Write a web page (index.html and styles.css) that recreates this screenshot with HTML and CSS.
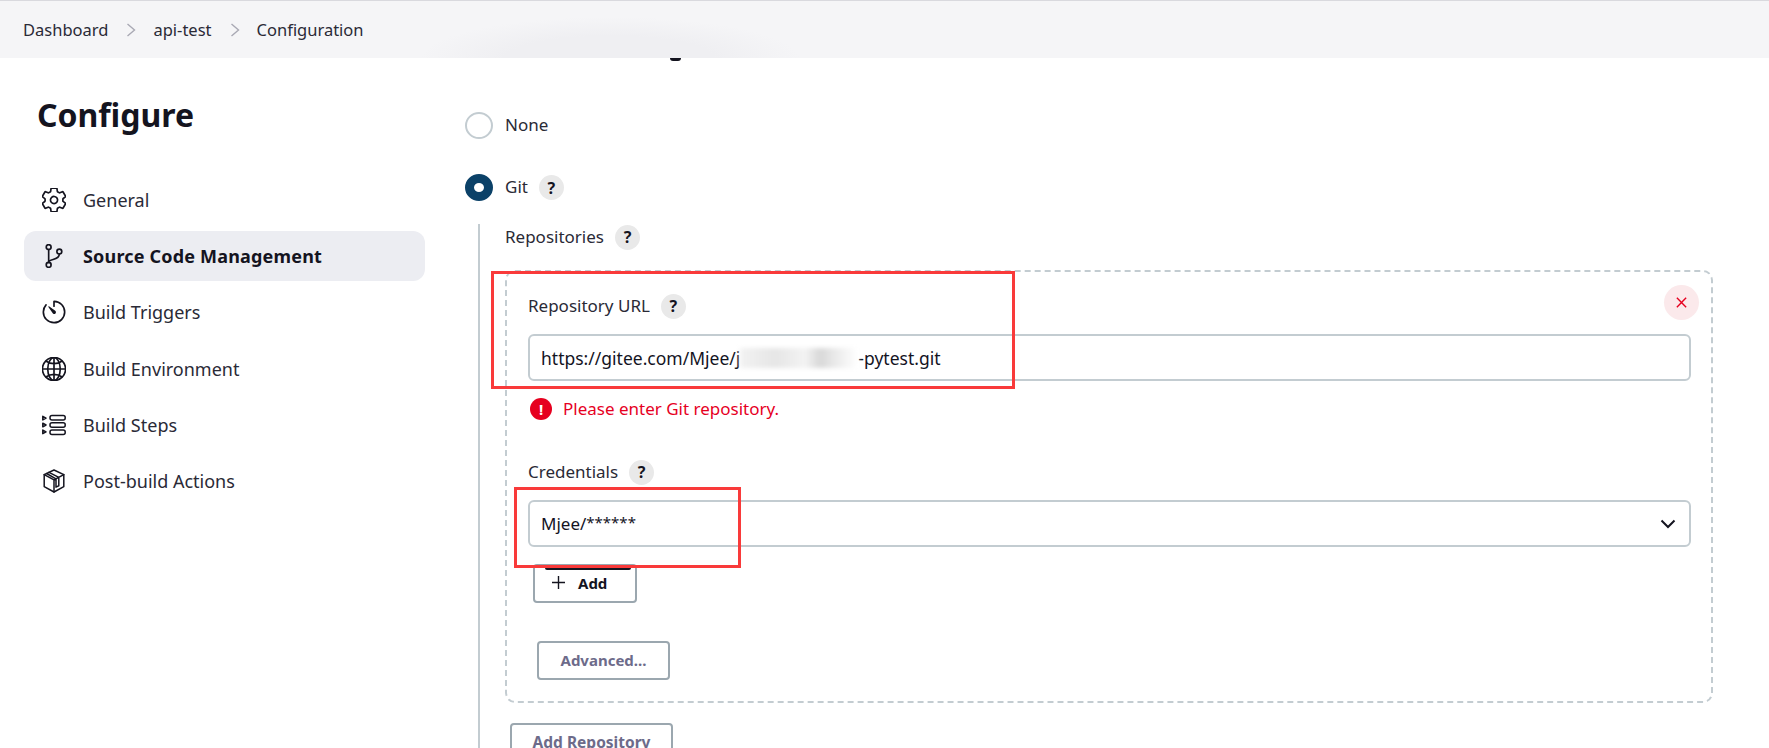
FILE: index.html
```html
<!DOCTYPE html>
<html lang="en">
<head>
<meta charset="utf-8">
<title>Configure</title>
<link rel="stylesheet" href="styles.css">
</head>
<body>
<nav class="crumbs">
  <span>Dashboard</span>
  <svg class="sep" viewBox="0 0 10 16"><path d="M1.5 2l7 6-7 6"/></svg>
  <span>api-test</span>
  <svg class="sep" viewBox="0 0 10 16"><path d="M1.5 2l7 6-7 6"/></svg>
  <span>Configuration</span>
  <i class="clipped-tail"></i>
</nav>
<div class="page">
  <aside class="side">
    <h1 class="title">Configure</h1>
    <ul class="menu">
      <li class="item">
        <svg class="ico" viewBox="40 40 432 432"><path d="M262.29 192.31a64 64 0 1057.4 57.4 64.13 64.13 0 00-57.4-57.4zM416.39 256a154.34 154.34 0 01-1.53 20.79l45.21 35.46a10.81 10.81 0 012.45 13.75l-42.77 74a10.81 10.81 0 01-13.14 4.59l-44.9-18.08a16.11 16.11 0 00-15.17 1.75A164.48 164.48 0 01325 400.8a15.94 15.94 0 00-8.82 12.14l-6.73 47.89a11.08 11.08 0 01-10.68 9.17h-85.54a11.11 11.11 0 01-10.69-8.87l-6.72-47.82a16.07 16.07 0 00-9-12.22 155.3 155.3 0 01-21.46-12.57 16 16 0 00-15.11-1.71l-44.89 18.07a10.81 10.81 0 01-13.14-4.58l-42.77-74a10.8 10.8 0 012.45-13.75l38.21-30a16.05 16.05 0 006-14.08c-.36-4.17-.58-8.33-.58-12.5s.21-8.27.58-12.35a16 16 0 00-6.07-13.94l-38.19-30A10.81 10.81 0 0149.48 186l42.77-74a10.81 10.81 0 0113.14-4.59l44.9 18.08a16.11 16.11 0 0015.17-1.75A164.48 164.48 0 01187 111.2a15.94 15.94 0 008.82-12.14l6.73-47.89A11.08 11.08 0 01213.23 42h85.54a11.11 11.11 0 0110.69 8.87l6.72 47.82a16.07 16.07 0 009 12.22 155.3 155.3 0 0121.46 12.57 16 16 0 0015.11 1.71l44.89-18.07a10.81 10.81 0 0113.14 4.58l42.77 74a10.8 10.8 0 01-2.45 13.75l-38.21 30a16.05 16.05 0 00-6.05 14.08c.33 4.14.55 8.3.55 12.47z"/></svg>
        General
      </li>
      <li class="item active">
        <svg class="ico" viewBox="40 40 432 432"><circle cx="160" cy="96" r="44"/><circle cx="160" cy="416" r="44"/><circle cx="352" cy="176" r="44"/><path d="M160 372V140M352 220c0 128-192 72-192 152"/></svg>
        Source Code Management
      </li>
      <li class="item">
        <svg class="ico" viewBox="40 40 432 432"><path d="M112.91 128A191.85 191.85 0 0064 254c-1.18 106.35 85.65 193.8 192 194 106.2.2 192-85.83 192-192 0-104.54-83.55-189.61-187.5-192a4.36 4.36 0 00-4.5 4.37V152"/><path class="solid" d="M233.38 278.63l-79-113a8.13 8.13 0 0111.32-11.32l113 79a32.5 32.5 0 01-37 53.34 33.21 33.21 0 01-8.32-8.02z"/></svg>
        Build Triggers
      </li>
      <li class="item">
        <svg class="ico" viewBox="40 40 432 432"><path d="M256 48C141.13 48 48 141.13 48 256s93.13 208 208 208 208-93.13 208-208S370.87 48 256 48z"/><path d="M256 48c-58.07 0-112.67 93.31-112.67 208S197.93 464 256 464s112.67-93.31 112.67-208S314.07 48 256 48z"/><path d="M117.33 117.33c38.24 27.15 86.38 43.34 138.67 43.34s100.43-16.19 138.67-43.34M394.67 394.67c-38.24-27.15-86.38-43.34-138.67-43.34s-100.43 16.19-138.67 43.34M256 48v416M464 256H48"/></svg>
        Build Environment
      </li>
      <li class="item">
        <svg class="ico" viewBox="0 0 24 24"><g class="thin"><path d="M.8 3.300l3.200 1.800-3.200 1.800zM.8 10.200l3.200 1.800-3.200 1.800zM.8 17.100l3.200 1.800-3.200 1.800z"/><rect x="8" y="2.500" width="15.200" height="4.500" rx="2"/><rect x="8" y="9.750" width="15.200" height="4.500" rx="2"/><rect x="8" y="17" width="15.200" height="4.500" rx="2"/></g></svg>
        Build Steps
      </li>
      <li class="item">
        <svg class="ico" viewBox="0 0 24 24"><g class="thin"><path d="M12 1l9.800 4.600v12L12 23 2.200 17.600v-12z"/><path d="M2.200 5.600L12 10.800l9.800-5.200M12 10.800V23M7 3.300l9.800 5v8.500l-2.800 1.300v-8.300L4.600 4.500"/></g></svg>
        Post-build Actions
      </li>
    </ul>
  </aside>

  <main class="main">
    <div class="option">
      <span class="radio"></span>
      <span class="txt">None</span>
    </div>
    <div class="option option-git">
      <span class="radio radio-on"></span>
      <span class="txt">Git</span>
      <span class="help">?</span>
    </div>
    <section class="nested">
      <div class="label-row label-repos"><span class="txt">Repositories</span><span class="help">?</span></div>
      <div class="repo-box">
        <button class="close" type="button" aria-label="Remove">
          <svg viewBox="0 0 14 14"><path d="M2 2l10 10M12 2L2 12"/></svg>
        </button>
        <div class="label-row"><span class="txt">Repository URL</span><span class="help">?</span></div>
        <div class="field field-url">https://gitee.com/Mjee/j<span class="smudge"></span>-pytest.git</div>
        <div class="error">
          <span class="error-ico">!</span>
          <span class="txt">Please enter Git repository.</span>
        </div>
        <div class="label-row label-cred"><span class="txt">Credentials</span><span class="help">?</span></div>
        <div class="field field-select">
          <span>Mjee/<span class="stars">******</span></span>
          <svg class="chev" viewBox="0 0 16 10"><path d="M1.500 1.500L8 8l6.500-6.500"/></svg>
        </div>
        <button class="btn btn-add" type="button">
          <i class="btn-smear"></i>
          <svg class="plus" viewBox="0 0 14 14"><path d="M7 0v14M0 7h14"/></svg>
          Add
        </button>
        <button class="btn btn-adv" type="button">Advanced...</button>
      </div>
      <button class="btn btn-repo" type="button">Add Repository</button>
    </section>
  </main>
</div>
<i class="mark mark-url"></i>
<i class="mark mark-cred"></i>
</body>
</html>
```
FILE: styles.css
```css
* { box-sizing: border-box; }
html, body { margin: 0; height: 748px; overflow: hidden; }
body {
  position: relative;
  background: #fff;
  color: #14141f;
  font-family: "Noto Sans", "Open Sans", sans-serif;
  font-size: 17px;
}
.txt { margin-bottom: 2px; }
.crumbs {
  position: relative;
  display: flex;
  align-items: center;
  height: 58px;
  padding-left: 23px;
  border-top: 1px solid #d9d9de;
  background: #f5f5f7 radial-gradient(ellipse 190px 42px at 610px 58px, #efeff2 55%, #f5f5f7 100%);
  color: #2a2a36;
  font-size: 16.500px;
}
.sep { width: 10px; height: 16px; margin: 0 17px 0 18px; fill: none; stroke: #a9a9b4; stroke-width: 1.4; }
.clipped-tail {
  position: absolute;
  left: 670px;
  top: 57px;
  width: 11px;
  height: 3px;
  border-radius: 0 0 6px 6px;
  background: #14141f;
}
.page { display: flex; }
.side { flex: none; width: 401px; margin-left: 24px; }
.title {
  margin: 32px 0 0 13px;
  font-size: 32px;
  line-height: 50px;
  font-weight: 700;
  color: #14141f;
}
.menu { list-style: none; margin: 35px 0 0; padding: 0; font-size: 18px; }
.item {
  display: flex;
  align-items: center;
  gap: 17px;
  height: 50px;
  margin-bottom: 6.200px;
  padding-left: 18px;
  border-radius: 12px;
  color: #2a2a36;
}
.item.active { background: #ecedf2; font-weight: 700; color: #14141f; letter-spacing: .18px; }
.ico { flex: none; width: 24px; height: 24px; fill: none; stroke: #14141f; stroke-width: 30; stroke-linecap: round; stroke-linejoin: round; }
.ico .solid { fill: #14141f; stroke: none; }
.ico .thin { stroke-width: 1.500; }
.main { flex: none; width: 1248px; margin-left: 40px; padding-top: 54px; }
.option { display: flex; align-items: center; height: 27px; color: #2a2a36; }
.option-git { margin-top: 35px; }
.radio {
  flex: none;
  width: 28px;
  height: 27px;
  margin-right: 12px;
  border: 2px solid #c3ccd1;
  border-radius: 50%;
  background: #fff;
}
.radio-on { border: 9px solid #0b4168; }
.help {
  display: inline-flex;
  align-items: center;
  justify-content: center;
  flex: none;
  width: 25px;
  height: 25px;
  margin-left: 11px;
  border-radius: 50%;
  background: #e9e9e9;
  color: #14141f;
  font-size: 16px;
  font-weight: 700;
}
.nested {
  margin: 23px 0 0 13px;
  padding-left: 25px;
  border-left: 2px solid #c3ccd1;
}
.label-row { display: flex; align-items: center; height: 26px; color: #2a2a36; }
.repo-box {
  position: relative;
  width: 1208px;
  margin-top: 20px;
  padding: 21px 20px 21px 21px;
  border: 2px dashed #c3ccd1;
  border-radius: 10px;
}
.close {
  position: absolute;
  top: 13px;
  right: 12px;
  display: flex;
  align-items: center;
  justify-content: center;
  width: 35px;
  height: 35px;
  padding: 0;
  border: 0;
  border-radius: 50%;
  background: #fbe9eb;
}
.close svg { width: 13px; height: 13px; fill: none; stroke: #e6001f; stroke-width: 1.500; }
.field {
  display: flex;
  align-items: center;
  height: 47px;
  padding: 0 11px;
  border: 2px solid #c3ccd1;
  border-radius: 6px;
  background: #fff;
  color: #14141f;
}
.field-url { margin-top: 15px; font-size: 17.500px; }
.smudge {
  display: inline-block;
  width: 118px;
  height: 20px;
  background: linear-gradient(90deg, #f2f2f2 0, #e6e6e6 30%, #f3f3f3 55%, #d8d8d8 68%, #ececec 82%, #fff 100%);
  filter: blur(2px);
}
.stars { font-size: 15px; vertical-align: 2px; }
.error { display: flex; align-items: center; height: 22px; margin-top: 17px; color: #e6001f; }
.error-ico {
  display: flex;
  align-items: center;
  justify-content: center;
  width: 22px;
  height: 22px;
  margin: 0 11px 0 2px;
  border-radius: 50%;
  background: #e6001f;
  color: #fff;
  font-size: 15px;
  font-weight: 700;
}
.label-cred { margin-top: 39px; }
.field-select { justify-content: space-between; margin-top: 15px; }
.chev { width: 16px; height: 10px; margin-right: 2px; fill: none; stroke: #14141f; stroke-width: 2; }
.btn {
  position: relative;
  display: flex;
  align-items: center;
  justify-content: center;
  height: 39px;
  padding: 0 0 2px;
  border: 2px solid #9ba7af;
  border-radius: 4px;
  background: #fff;
  font: 700 15px "Noto Sans", "Open Sans", sans-serif;
  color: #6d6b8a;
}
.btn-add { width: 104px; margin: 17px 0 0 5px; color: #14141f; gap: 13px; justify-content: flex-start; padding-left: 17px; }
.btn-smear {
  position: absolute;
  left: 10px;
  top: 2px;
  width: 86px;
  height: 2px;
  border-radius: 0 0 3px 3px;
  background: #14141f;
}
.plus { width: 13px; height: 13px; fill: none; stroke: #14141f; stroke-width: 1.500; }
.btn-adv { width: 133px; margin: 38px 0 0 9px; }
.btn-repo { width: 163px; margin: 20px 0 0 5px; font-size: 15.500px; }
.mark { position: absolute; border: 3px solid #f93a3a; pointer-events: none; }
.mark-url { left: 491px; top: 271px; width: 524px; height: 118px; }
.mark-cred { left: 514px; top: 487px; width: 227px; height: 81px; }
```
